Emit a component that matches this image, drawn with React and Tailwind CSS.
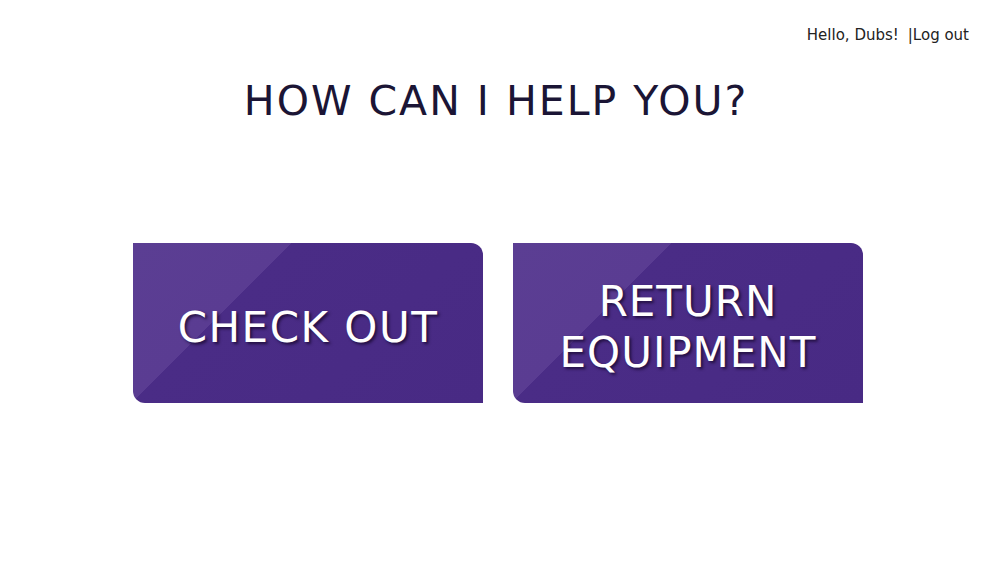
export default function App() {
  const font = { fontFamily: '"DejaVu Sans", "Liberation Sans", sans-serif' };

  return (
    <div className="w-[1000px] h-[578px] bg-white relative" style={font}>
      <div className="flex justify-end pt-[28px] pr-[31px] text-[15px] text-[#222] leading-none">
        <span>Hello, Dubs!</span>
        <span className="ml-[9px]">|Log out</span>
      </div>

      <h1 className="mt-[38px] text-center text-[41px] leading-none text-[#1b1535] tracking-[2px] pr-[8px]">
        HOW CAN I HELP YOU?
      </h1>

      <div className="mt-[121px] flex justify-center gap-[30px] pr-[4px]">
        <button className="w-[350px] h-[160px] rounded-tr-[12px] rounded-bl-[12px] bg-[linear-gradient(135deg,#5b3e93_0%,#5a3c92_31%,#4a2c86_31%,#482a84_100%)] flex items-center justify-center pt-[8px] text-white text-[42px] tracking-[1.5px] leading-[51px] [text-shadow:2px_2px_3px_rgba(20,5,40,0.75)]">
          CHECK OUT
        </button>
        <button className="w-[350px] h-[160px] rounded-tr-[12px] rounded-bl-[12px] bg-[linear-gradient(135deg,#5b3e93_0%,#5a3c92_31%,#4a2c86_31%,#482a84_100%)] flex flex-col items-center justify-center pt-[8px] text-white text-[42px] tracking-[1px] leading-[51px] [text-shadow:2px_2px_3px_rgba(20,5,40,0.75)]">
          <span>RETURN</span>
          <span>EQUIPMENT</span>
        </button>
      </div>
    </div>
  );
}
